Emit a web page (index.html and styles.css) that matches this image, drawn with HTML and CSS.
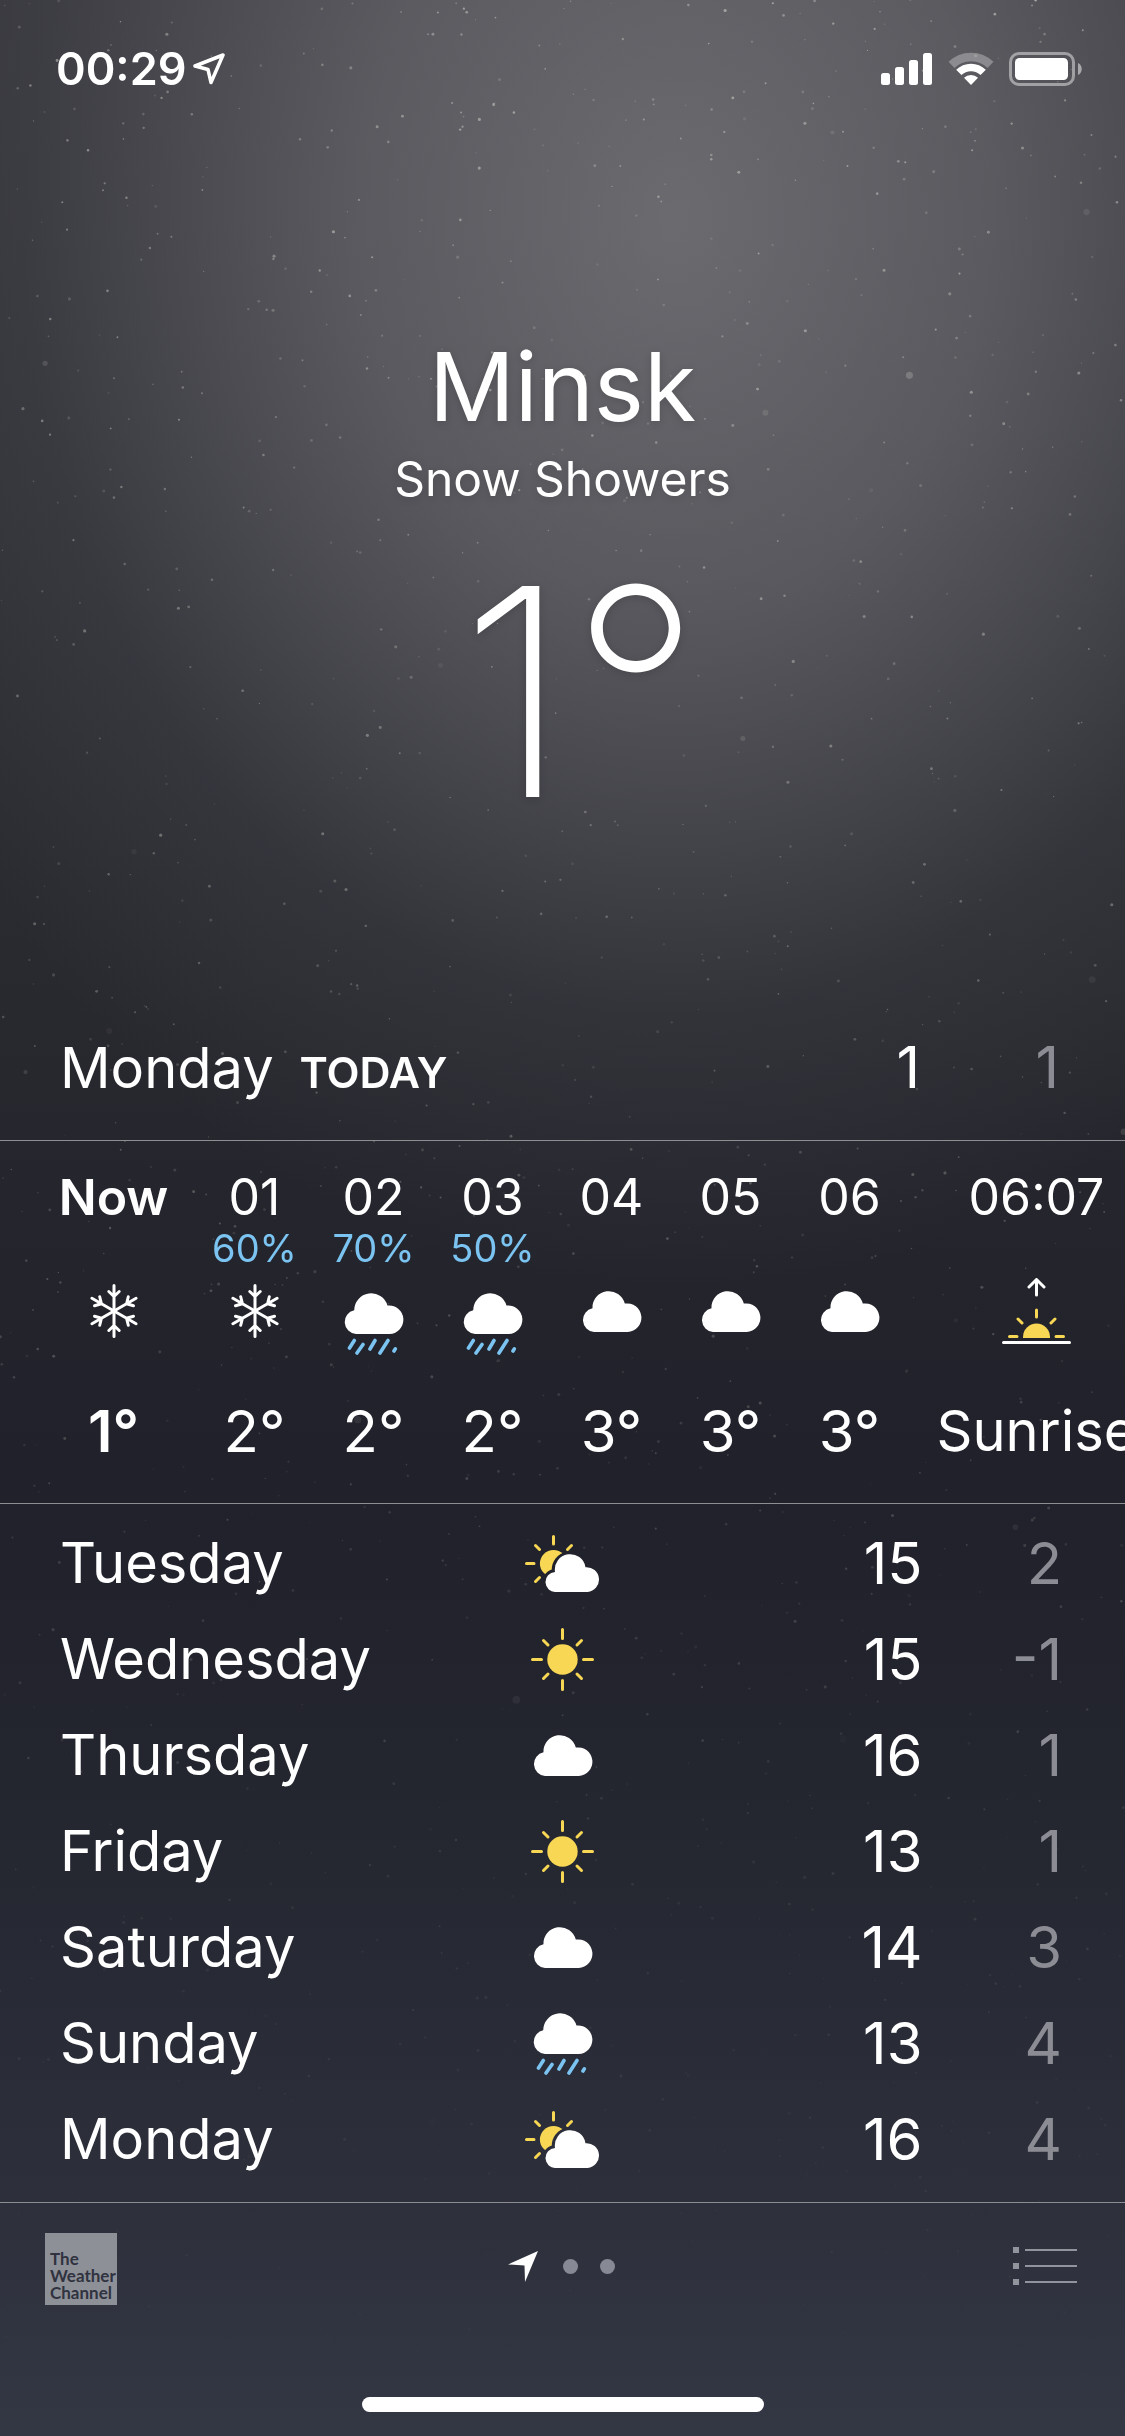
FILE: index.html
```html
<!DOCTYPE html>
<html lang="en">
<head>
<meta charset="utf-8">
<meta name="viewport" content="width=device-width, initial-scale=1">
<title>Weather</title>
<link rel="stylesheet" href="styles.css">
</head>
<body>
<svg class="sprite" aria-hidden="true">
  <defs>
    <mask id="behind-cloud">
      <rect width="75" height="57" fill="#fff"/>
      <path d="M31 57A10 10 0 0 1 30 37A15.3 15.3 0 0 1 60.5 32.2A12.4 12.4 0 0 1 62.6 57Z" fill="#000" stroke="#000" stroke-width="6"/>
    </mask>
  </defs>
  <symbol id="cloud" viewBox="0 0 60 42">
    <path fill="#fff" d="M12 42A12 12 0 0 1 10.5 18.3A16.4 16.4 0 0 1 42.8 13.6A14.3 14.3 0 1 1 45.7 42Z"/>
  </symbol>
  <symbol id="rain" viewBox="0 0 60 63">
    <path fill="#fff" d="M12 42A12 12 0 0 1 10.2 18.3A17 17 0 0 1 43.5 13.5A14.3 14.3 0 1 1 45.7 42Z"/>
    <path fill="none" stroke="#7bc4f1" stroke-width="3.6" stroke-linecap="round" d="M10.3 48.5L5.5 56M19 52.5L13 61M31 48.5L26 57M44 48.5L36 61M51.3 56.8L50 59"/>
  </symbol>
  <symbol id="sun" viewBox="0 0 63 63">
    <circle cx="31.5" cy="31.5" r="15.2" fill="#f8d755"/>
    <path fill="none" stroke="#f8d755" stroke-width="3" stroke-linecap="round" d="M31.5 1.5V10.5M31.5 52.5V61.5M1.5 31.5H10.5M52.5 31.5H61.5M12.5 12.5L17 17M50.5 12.5L46 17M12.5 50.5L17 46M50.5 50.5L46 46"/>
  </symbol>
  <symbol id="partly" viewBox="0 0 75 57">
    <g mask="url(#behind-cloud)"><circle cx="28.5" cy="28.5" r="13.6" fill="#f8d755"/></g>
    <path fill="none" stroke="#f8d755" stroke-width="3" stroke-linecap="round" d="M28.5 1.5V9M1.5 28.5H9M10.5 10.5L14.5 14.5M46.5 10.5L42.5 14.5M14.5 42.5L10.5 46.5"/>
    <path fill="#fff" d="M31 57A10 10 0 0 1 30 37A15.3 15.3 0 0 1 60.5 32.2A12.4 12.4 0 0 1 62.6 57Z"/>
  </symbol>
  <symbol id="snow" viewBox="0 0 50 54">
    <g fill="none" stroke="#fff" stroke-width="3" stroke-linecap="round" stroke-linejoin="round">
      <path id="arm" d="M25 27V1.5M19.8 7.5L25 12.5L30.2 7.5"/>
      <use href="#arm" transform="rotate(60 25 27)"/>
      <use href="#arm" transform="rotate(120 25 27)"/>
      <use href="#arm" transform="rotate(180 25 27)"/>
      <use href="#arm" transform="rotate(240 25 27)"/>
      <use href="#arm" transform="rotate(300 25 27)"/>
    </g>
  </symbol>
  <symbol id="sunrise" viewBox="0 0 69 66">
    <path fill="none" stroke="#fff" stroke-width="3" stroke-linecap="round" stroke-linejoin="round" d="M34.5 17V1.5M27 9L34.5 1.5L42 9M1.5 64.5H67.5"/>
    <path fill="#f8d755" d="M21 60V59A13.5 13.5 0 0 1 48 59V60Z"/>
    <path fill="none" stroke="#f8d755" stroke-width="3" stroke-linecap="round" d="M34.5 32V39M7.5 58.5H15M54 58.5H61.5M16 41L20 45M53 41L49 45"/>
  </symbol>
</svg>

<canvas class="snowfall" id="snowfall" aria-hidden="true"></canvas>

<div class="app">
  <header class="status">
    <time class="clock">00:29</time>
    <svg class="locating" width="32" height="32" viewBox="0 0 32 32" aria-hidden="true"><path d="M30 2L2 13L15 16.500L18 29.500Z" fill="none" stroke="#fff" stroke-width="3.500" stroke-linejoin="round"/></svg>
    <div class="indicators">
      <svg width="52" height="34" viewBox="0 0 52 34" role="img" aria-label="Signal" fill="#fff"><rect y="21" width="9" height="12" rx="2.500"/><rect x="14" y="15" width="9" height="18" rx="2.500"/><rect x="28" y="8" width="9" height="25" rx="2.500"/><rect x="42" y="1" width="9" height="32" rx="2.500"/></svg>
      <svg width="46" height="34" viewBox="0 0 46 34" role="img" aria-label="Wi-Fi" fill="none" stroke="#fff"><path d="M3.500 12.900A28 28 0 0 1 42.500 12.900" stroke-width="8.500" opacity=".3"/><path d="M10.800 20.400A17.500 17.500 0 0 1 35.200 20.400" stroke-width="7.500"/><path d="M23 33L16 25.800A10 10 0 0 1 30 25.800Z" fill="#fff" stroke="none"/></svg>
      <svg width="74" height="34" viewBox="0 0 74 34" role="img" aria-label="Battery"><rect x="1.500" y="1.500" width="63" height="31" rx="8.500" fill="none" stroke="#fff" stroke-width="3" opacity=".45"/><rect x="6" y="6" width="53" height="22" rx="4.500" fill="#fff"/><path d="M69 11C74 13 74 21 69 23Z" fill="#fff" opacity=".5"/></svg>
    </div>
  </header>

  <main>
    <section class="current">
      <h1 class="city">Minsk</h1>
      <p class="condition">Snow Showers</p>
      <p class="temperature">1°</p>
    </section>

    <section class="today">
      <h2 class="today-name">Monday <span class="today-tag">TODAY</span></h2>
      <span class="high">1</span>
      <span class="low">1</span>
    </section>

    <ul class="hourly">
      <li class="hour now"><span class="hour-time">Now</span><span class="chance"></span><span class="hour-icon"><svg width="50" height="54"><use href="#snow"/></svg></span><span class="hour-temp">1°</span></li>
      <li class="hour"><span class="hour-time">01</span><span class="chance">60%</span><span class="hour-icon"><svg width="50" height="54"><use href="#snow"/></svg></span><span class="hour-temp">2°</span></li>
      <li class="hour"><span class="hour-time">02</span><span class="chance">70%</span><span class="hour-icon rainy"><svg width="60" height="63"><use href="#rain"/></svg></span><span class="hour-temp">2°</span></li>
      <li class="hour"><span class="hour-time">03</span><span class="chance">50%</span><span class="hour-icon rainy"><svg width="60" height="63"><use href="#rain"/></svg></span><span class="hour-temp">2°</span></li>
      <li class="hour"><span class="hour-time">04</span><span class="chance"></span><span class="hour-icon"><svg width="60" height="42"><use href="#cloud"/></svg></span><span class="hour-temp">3°</span></li>
      <li class="hour"><span class="hour-time">05</span><span class="chance"></span><span class="hour-icon"><svg width="60" height="42"><use href="#cloud"/></svg></span><span class="hour-temp">3°</span></li>
      <li class="hour"><span class="hour-time">06</span><span class="chance"></span><span class="hour-icon"><svg width="60" height="42"><use href="#cloud"/></svg></span><span class="hour-temp">3°</span></li>
      <li class="hour event"><span class="hour-time">06:07</span><span class="chance"></span><span class="hour-icon"><svg width="69" height="66"><use href="#sunrise"/></svg></span><span class="hour-temp">Sunrise</span></li>
    </ul>

    <div class="daily">
      <table class="days">
        <tbody>
          <tr><th scope="row">Tuesday</th><td class="day-icon"><svg width="75" height="57"><use href="#partly"/></svg></td><td class="day-high">15</td><td class="day-low">2</td></tr>
          <tr><th scope="row">Wednesday</th><td class="day-icon"><svg width="63" height="63"><use href="#sun"/></svg></td><td class="day-high">15</td><td class="day-low">-1</td></tr>
          <tr><th scope="row">Thursday</th><td class="day-icon"><svg width="60" height="42"><use href="#cloud"/></svg></td><td class="day-high">16</td><td class="day-low">1</td></tr>
          <tr><th scope="row">Friday</th><td class="day-icon"><svg width="63" height="63"><use href="#sun"/></svg></td><td class="day-high">13</td><td class="day-low">1</td></tr>
          <tr><th scope="row">Saturday</th><td class="day-icon"><svg width="60" height="42"><use href="#cloud"/></svg></td><td class="day-high">14</td><td class="day-low">3</td></tr>
          <tr><th scope="row">Sunday</th><td class="day-icon"><svg width="60" height="63"><use href="#rain"/></svg></td><td class="day-high">13</td><td class="day-low">4</td></tr>
          <tr><th scope="row">Monday</th><td class="day-icon"><svg width="75" height="57"><use href="#partly"/></svg></td><td class="day-high">16</td><td class="day-low">4</td></tr>
        </tbody>
      </table>
    </div>
  </main>

  <footer class="toolbar">
    <a class="provider" href="#">The<br>Weather<br>Channel</a>
    <nav class="pages" aria-label="Cities">
      <button class="page" type="button" aria-label="Current location"><svg width="30" height="31" viewBox="0 0 30 31"><path d="M30 0L0 13.500L16.500 14.500L17 31Z" fill="#fff"/></svg></button>
      <button class="page dot" type="button" aria-label="City 2"></button>
      <button class="page dot" type="button" aria-label="City 3"></button>
    </nav>
    <button class="list" type="button" aria-label="City list"><svg width="64" height="38" viewBox="0 0 64 38" fill="#92949d"><path d="M0 0H6V6H0ZM12 2H64V4H12ZM0 16H6V22H0ZM12 18H64V20H12ZM0 32H6V38H0ZM12 34H64V36H12Z"/></svg></button>
  </footer>
  <div class="home-bar"></div>
</div>
<script src="snow.js"></script>
</body>
</html>
```

FILE: styles.css
```css
* {
  box-sizing: border-box;
}

html {
  background: #31343f;
}

body {
  margin: 0;
  color: #fff;
  font-family: Inter, "Liberation Sans", sans-serif;
  font-size: 58px;
  line-height: 64px;
}

h1, h2, p, ul {
  margin: 0;
  padding: 0;
  font-weight: 400;
}

button {
  padding: 0;
  border: 0;
  background: none;
}

svg {
  display: block;
}

.sprite {
  position: absolute;
  width: 0;
  height: 0;
}

.snowfall {
  position: absolute;
  inset: 0;
  width: 100%;
  height: 100%;
}

.app {
  display: flex;
  flex-direction: column;
  min-height: 100vh;
  background:
    radial-gradient(ellipse 78% 44% at 60% 9%, rgba(116, 116, 121, .85), rgba(114, 114, 119, .62) 36%, rgba(92, 92, 101, .2) 74%, rgba(80, 80, 90, 0)),
    linear-gradient(#35353b, #303037 20%, #28282f 42%, #20212a 60%, #242630 75%, #2d303b 90%, #333744);
}

.status,
main,
.toolbar,
.home-bar {
  position: relative;
}

.status {
  display: flex;
  align-items: center;
  gap: 6px;
  padding: 37px 42px 0 56px;
}

.clock {
  font-size: 45px;
  font-weight: 600;
}

.indicators {
  display: flex;
  gap: 15px;
  margin-left: auto;
}

.current {
  padding: 226px 0 194px;
  text-align: center;
  text-shadow: 0 2px 8px rgba(0, 0, 0, .15);
}

.city {
  font-size: 95px;
  line-height: 120px;
}

.condition {
  font-size: 48px;
}

.temperature {
  margin-top: 36px;
  padding-left: 36px;
  font-size: 290px;
  font-weight: 200;
  line-height: 290px;
}

.today {
  display: flex;
  align-items: baseline;
  padding: 4px 66px 36px 60px;
  border-bottom: 1px solid #8d8d92;
}

.today-name {
  margin-right: auto;
  font-size: 56px;
}

.today-tag {
  margin-left: 10px;
  font-size: 43px;
  font-weight: 600;
}

.low {
  width: 139px;
  text-align: right;
}

.low,
.day-low {
  color: #8c8d94;
}

.hourly {
  display: flex;
  padding: 24px 0 40px 32px;
  overflow: hidden;
  border-bottom: 1px solid #8d8d92;
  list-style: none;
}

.hour {
  display: flex;
  flex: 0 0 119px;
  flex-direction: column;
  align-items: center;
  white-space: nowrap;
}

.hour.now {
  flex-basis: 163px;
  font-weight: 600;
}

.hour.event {
  flex-basis: 255px;
}

.event .hour-temp {
  font-size: 56px;
}

.hour-time {
  font-size: 50px;
}

.chance {
  height: 38px;
  color: #7bc4f1;
  font-size: 38px;
  line-height: 38px;
}

.hour-icon {
  display: flex;
  align-items: center;
  height: 88px;
  margin-bottom: 44px;
}

.hour-icon.rainy {
  align-items: flex-end;
}

.daily {
  padding: 11px 0 15px;
  border-bottom: 1px solid #8d8d92;
}

.days {
  width: 100%;
  border-collapse: collapse;
  table-layout: fixed;
}

.days tr {
  height: 96px;
}

.days th,
.days td {
  padding: 0;
}

.days th {
  width: 40%;
  padding-left: 60px;
  font-size: 56px;
  font-weight: 400;
  text-align: left;
}

.day-icon {
  width: 20%;
}

.day-icon svg {
  margin: 0 auto;
}

.day-high {
  width: 22%;
  text-align: right;
}

.days .day-low {
  width: 18%;
  padding-right: 63px;
  text-align: right;
}

.toolbar {
  display: grid;
  grid-template-columns: 1fr auto 1fr;
  align-items: start;
  padding: 30px 48px 0 45px;
}

.provider {
  width: 72px;
  height: 72px;
  padding: 17px 0 0 5px;
  background: #8e9098;
  color: #30333f;
  font-family: Lato, "Open Sans", sans-serif;
  font-size: 17px;
  font-weight: 700;
  line-height: 17px;
  text-decoration: none;
}

.pages {
  display: flex;
  align-items: center;
  gap: 22px;
  padding-top: 18px;
}

.page:first-child {
  margin-right: 3px;
}

.dot {
  width: 15px;
  height: 15px;
  border-radius: 50%;
  background: #878994;
}

.list {
  justify-self: end;
  margin-top: 14px;
}

.home-bar {
  width: 402px;
  height: 15px;
  margin: auto auto 24px;
  border-radius: 8px;
  background: #fff;
}
```

FILE: snow.js
```js
// Scatters faint flakes over the sky, thinning out toward the bottom.
const canvas = document.getElementById('snowfall');
const width = canvas.width = canvas.clientWidth;
const height = canvas.height = canvas.clientHeight;
const ctx = canvas.getContext('2d');
let seed = 7;
const random = () => (seed = (seed * 16807) % 2147483647) / 2147483647;

for (let i = 0; i < 1500; i++) {
  const x = random() * width;
  const y = Math.pow(random(), 1.2) * height;
  const near = random() > 0.98;
  const radius = near ? 2 + random() * 2 : 0.6 + random();
  const alpha = (0.12 + random() * 0.4) * (1 - y / height) * (near ? 0.6 : 1);
  ctx.fillStyle = `rgba(230, 230, 220, ${alpha})`;
  ctx.beginPath();
  ctx.arc(x, y, radius, 0, Math.PI * 2);
  ctx.fill();
}
```
